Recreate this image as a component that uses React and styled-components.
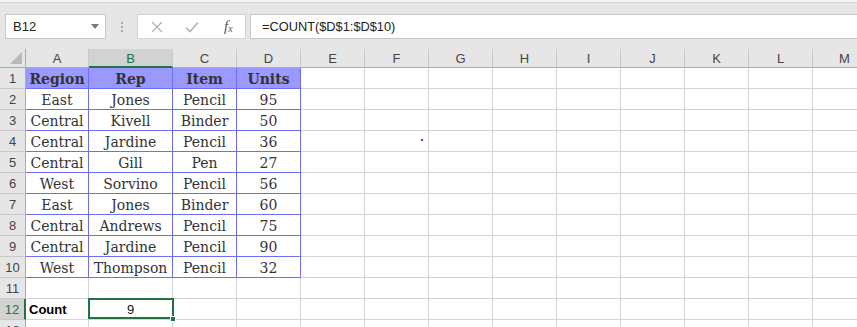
import React from 'react';
import styled, { createGlobalStyle, css } from 'styled-components';

const GlobalStyle = createGlobalStyle`
  html, body {
    margin: 0;
    padding: 0;
    background: #fff;
  }
  * {
    box-sizing: border-box;
  }
`;

const columns = [
  { name: 'A', width: 63 },
  { name: 'B', width: 84 },
  { name: 'C', width: 64 },
  { name: 'D', width: 64 },
  { name: 'E', width: 64 },
  { name: 'F', width: 64 },
  { name: 'G', width: 64 },
  { name: 'H', width: 64 },
  { name: 'I', width: 64 },
  { name: 'J', width: 64 },
  { name: 'K', width: 64 },
  { name: 'L', width: 64 },
  { name: 'M', width: 64 },
];

const table = [
  ['Region', 'Rep', 'Item', 'Units'],
  ['East', 'Jones', 'Pencil', '95'],
  ['Central', 'Kivell', 'Binder', '50'],
  ['Central', 'Jardine', 'Pencil', '36'],
  ['Central', 'Gill', 'Pen', '27'],
  ['West', 'Sorvino', 'Pencil', '56'],
  ['East', 'Jones', 'Binder', '60'],
  ['Central', 'Andrews', 'Pencil', '75'],
  ['Central', 'Jardine', 'Pencil', '90'],
  ['West', 'Thompson', 'Pencil', '32'],
];

const GREEN = '#217346';

function App() {
  const rows = Array.from({ length: 13 }, (_, i) => i + 1);

  return (
    <>
      <GlobalStyle />
      <Window>
        <FormulaBar>
          <NameBox>
            <span>B12</span>
            <Caret />
          </NameBox>
          <Grip>
            <i /><i /><i />
          </Grip>
          <ActionBox>
            <ActionIcon>
              <svg width="12" height="12" viewBox="0 0 12 12">
                <path d="M1 1 L11 11 M11 1 L1 11" stroke="#b3b3b3" strokeWidth="1.3" fill="none" />
              </svg>
            </ActionIcon>
            <ActionIcon>
              <svg width="14" height="12" viewBox="0 0 14 12">
                <path d="M1 6.5 L5 10.5 L13 1.5" stroke="#b3b3b3" strokeWidth="1.6" fill="none" />
              </svg>
            </ActionIcon>
            <FxLabel>
              f<sub>x</sub>
            </FxLabel>
          </ActionBox>
          <FormulaInput>=COUNT($D$1:$D$10)</FormulaInput>
        </FormulaBar>

        <Sheet $cols={columns.map((c) => `${c.width}px`).join(' ')}>
          <Corner>
            <svg width="12" height="12" viewBox="0 0 12 12">
              <path d="M12 0 L12 12 L0 12 Z" fill="#b8b8b8" />
            </svg>
          </Corner>
          {columns.map((c) => (
            <ColHeader key={c.name} $active={c.name === 'B'}>
              {c.name}
            </ColHeader>
          ))}

          {rows.map((r) => (
            <React.Fragment key={r}>
              <RowHeader $active={r === 12}>{r}</RowHeader>
              {columns.map((c, ci) => {
                const inTable = r <= 10 && ci < 4;
                if (inTable) {
                  return (
                    <DataCell key={c.name} $head={r === 1}>
                      {table[r - 1][ci]}
                    </DataCell>
                  );
                }
                if (r === 12 && ci === 0) {
                  return <LabelCell key={c.name}>Count</LabelCell>;
                }
                if (r === 12 && ci === 1) {
                  return (
                    <Cell key={c.name} $selected>
                      9
                      <FillHandle />
                    </Cell>
                  );
                }
                return <Cell key={c.name} />;
              })}
            </React.Fragment>
          ))}
          <StrayDot />
        </Sheet>
      </Window>
    </>
  );
}

const Window = styled.div`
  width: 857px;
  height: 327px;
  overflow: hidden;
  background: #e6e6e6;
  font-family: "Liberation Sans", Arial, sans-serif;
`;

const FormulaBar = styled.div`
  height: 49px;
  display: flex;
  align-items: flex-start;
  padding: 13px 0 0 5px;
  border-top: 2px solid #f2f2f2;
  box-shadow: inset 0 1px 0 #d6d6d6;
  position: relative;
`;

const NameBox = styled.div`
  width: 101px;
  height: 25px;
  margin-top: -1px;
  background: #fff;
  border: 1px solid #c6c6c6;
  display: flex;
  align-items: center;
  justify-content: space-between;
  padding: 0 6px 0 7px;
  font-size: 13px;
  color: #222;
`;

const Caret = styled.span`
  width: 0;
  height: 0;
  border-left: 4px solid transparent;
  border-right: 4px solid transparent;
  border-top: 5px solid #7a7a7a;
`;

const Grip = styled.div`
  width: 31px;
  height: 25px;
  margin-top: -1px;
  display: flex;
  flex-direction: column;
  align-items: center;
  justify-content: center;
  gap: 2px;

  i {
    width: 2px;
    height: 2px;
    background: #a8a8a8;
  }
`;

const ActionBox = styled.div`
  width: 109px;
  height: 25px;
  margin-top: -1px;
  background: #fff;
  border: 1px solid #d2d2d2;
  display: flex;
  align-items: center;
  padding: 0 0 0 13px;
`;

const ActionIcon = styled.span`
  width: 34px;
  display: flex;
  align-items: center;
  justify-content: flex-start;
`;

const FxLabel = styled.span`
  font-family: "Liberation Serif", "Times New Roman", serif;
  font-style: italic;
  font-size: 15px;
  color: #555;
  margin-left: 5px;

  sub {
    font-size: 10px;
    vertical-align: -1px;
  }
`;

const FormulaInput = styled.div`
  flex: 1;
  height: 25px;
  margin-top: -1px;
  margin-left: 4px;
  background: #fff;
  border: 1px solid #c6c6c6;
  border-right: none;
  display: flex;
  align-items: center;
  padding-left: 11px;
  font-size: 12.8px;
  color: #222;
`;

const Sheet = styled.div`
  display: grid;
  grid-template-columns: 26px ${(p) => p.$cols};
  grid-template-rows: 19px repeat(13, 21px);
  position: relative;
  background: #fff;
`;

const headerBase = css`
  background: #e6e6e6;
  color: #444;
  font-family: "Liberation Sans", Arial, sans-serif;
  font-size: 13px;
  display: flex;
  align-items: center;
  justify-content: center;
`;

const Corner = styled.div`
  ${headerBase};
  border-right: 1px solid #ababab;
  border-bottom: 1px solid #ababab;
  align-items: flex-end;
  justify-content: flex-end;
  padding: 0 3px 3px 0;
`;

const ColHeader = styled.div`
  ${headerBase};
  border-right: 1px solid #c8c8c8;
  border-bottom: 1px solid #ababab;
  padding-top: 1px;

  ${(p) =>
    p.$active &&
    css`
      background: #d2d2d2;
      color: ${GREEN};
      border-bottom: 2px solid ${GREEN};
    `}
`;

const RowHeader = styled.div`
  ${headerBase};
  border-right: 1px solid #ababab;
  border-bottom: 1px solid #c8c8c8;
  font-size: 13px;

  ${(p) =>
    p.$active &&
    css`
      background: #d2d2d2;
      color: ${GREEN};
      border-right: 2px solid ${GREEN};
    `}
`;

const Cell = styled.div`
  border-right: 1px solid #d4d4d4;
  border-bottom: 1px solid #d4d4d4;
  font-family: "Liberation Sans", Arial, sans-serif;
  font-size: 13px;
  color: #111;
  display: flex;
  align-items: center;
  justify-content: center;
  position: relative;
  padding-top: 1px;

  ${(p) =>
    p.$selected &&
    css`
      &::before {
        content: '';
        position: absolute;
        top: -1px;
        left: -1px;
        right: -2px;
        bottom: 0;
        border: 2px solid ${GREEN};
      }
    `}
`;

const FillHandle = styled.span`
  position: absolute;
  right: -4px;
  bottom: -3px;
  width: 6px;
  height: 6px;
  background: ${GREEN};
  border: 1px solid #fff;
  z-index: 2;
`;

const DataCell = styled.div`
  border-right: 1px solid #6d6df5;
  border-bottom: 1px solid #6d6df5;
  background: ${(p) => (p.$head ? '#9999ff' : '#fff')};
  font-family: "DejaVu Serif", "Liberation Serif", serif;
  font-size: 14px;
  font-weight: ${(p) => (p.$head ? 700 : 400)};
  color: #333;
  display: flex;
  align-items: center;
  justify-content: center;
  white-space: nowrap;
  overflow: hidden;
  padding-top: 1px;
`;

const LabelCell = styled(Cell)`
  justify-content: flex-start;
  padding-left: 3px;
  font-weight: 700;
  color: #000;
`;

const StrayDot = styled.span`
  position: absolute;
  left: 421px;
  top: 90px;
  width: 2px;
  height: 2px;
  background: #3b3bff;
`;

export default App;
